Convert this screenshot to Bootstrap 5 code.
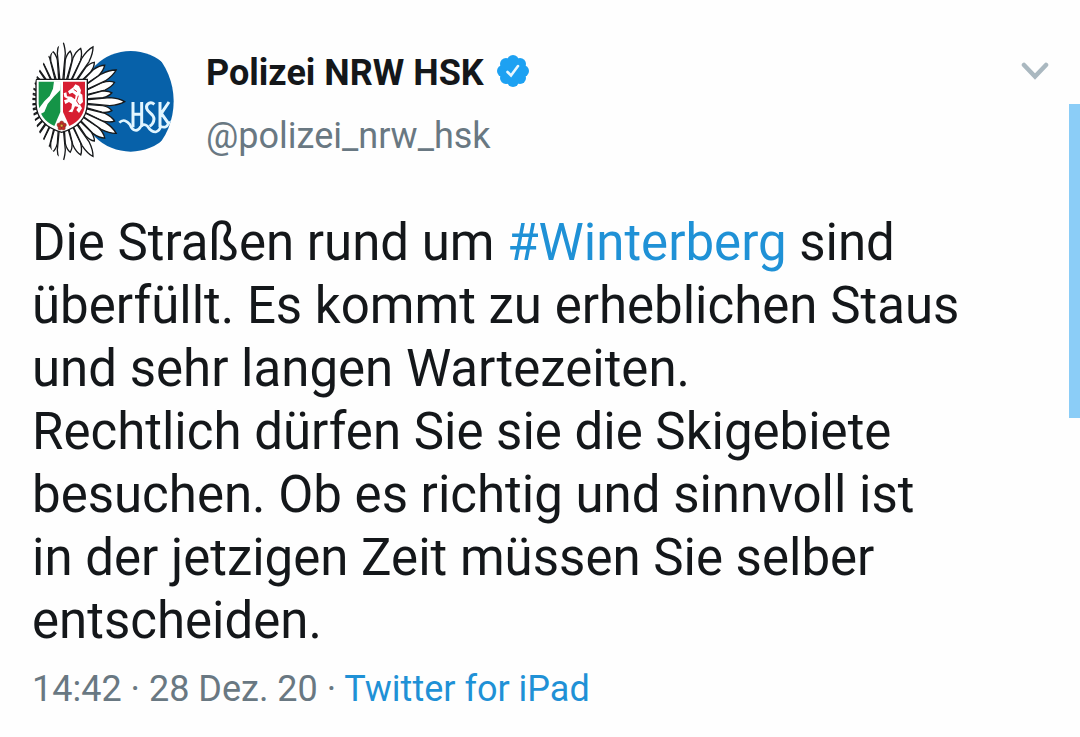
<!DOCTYPE html>
<html lang="de">
<head>
<meta charset="utf-8">
<meta name="viewport" content="width=device-width, initial-scale=1">
<title>Polizei NRW HSK</title>
<link rel="stylesheet" href="https://cdn.jsdelivr.net/npm/bootstrap@5.3.0/dist/css/bootstrap.min.css">
<style>
  body { font-family: Roboto, "Liberation Sans", sans-serif; color: #14171a; background: #fefefe; }
  .tweet { padding: 30px 31px 24px 32px; }
  .avatar { width: 144px; height: 140px; }
  .identity { margin-left: 30px; padding-top: 22px; }
  .author { font-size: 36px; line-height: 42px; font-weight: 700; }
  .verified { margin-left: 13px; margin-bottom: 5px; }
  .handle, .meta { font-size: 36px; line-height: 42px; color: #697882; }
  .handle { margin-top: 21px; }
  .tweet-text { font-size: 51px; line-height: 63px; margin-top: 41px; max-width: 932px; }
  .tweet-link { color: #1f91d6; text-decoration: none; }
  .meta { margin-top: 16px; }
  .more { margin-top: 32px; }
  .scroll-thumb { top: 104px; right: 0; width: 11px; height: 314px; background: #8bcdf7; }
</style>
</head>
<body>
<main>
  <article class="tweet">
    <header class="d-flex align-items-start">
      <svg class="avatar flex-shrink-0" viewBox="37 0 432 420" role="img" aria-label="Polizei HSK">
        <defs>
          <clipPath id="round"><circle cx="250" cy="214" r="212"/></clipPath>
          <path id="long" d="M60-4L145-12Q174-10 190 0Q174 10 145 12L60 4Z"/>
          <path id="mid" d="M60-4L135-12Q158-10 170 0Q158 10 135 12L60 4Z"/>
          <path id="short" d="M60-3L125-10Q144-9 154 0Q144 9 125 10L60 3Z"/>
        </defs>
        <g clip-path="url(#round)">
          <circle cx="333" cy="214" r="151" fill="#0761a9"/>
          <g transform="translate(125 215)" fill="#fff" stroke="#17191b" stroke-width="4">
            <use href="#short" transform="rotate(10)"/><use href="#mid" transform="rotate(20)"/>
            <use href="#mid" transform="rotate(40)"/><use href="#short" transform="rotate(50)"/>
            <use href="#mid" transform="rotate(70)"/><use href="#short" transform="rotate(80)"/>
            <use href="#short" transform="rotate(100)"/><use href="#mid" transform="rotate(110)"/>
            <use href="#short" transform="rotate(130)"/><use href="#mid" transform="rotate(140)"/>
            <use href="#short" transform="rotate(160)"/><use href="#short" transform="rotate(170)"/>
            <use href="#short" transform="rotate(190)"/><use href="#short" transform="rotate(200)"/>
            <use href="#mid" transform="rotate(220)"/><use href="#short" transform="rotate(230)"/>
            <use href="#mid" transform="rotate(250)"/><use href="#short" transform="rotate(260)"/>
            <use href="#short" transform="rotate(280)"/><use href="#mid" transform="rotate(290)"/>
            <use href="#short" transform="rotate(310)"/><use href="#mid" transform="rotate(320)"/>
            <use href="#mid" transform="rotate(340)"/><use href="#short" transform="rotate(350)"/>
            <use href="#long"/><use href="#long" transform="rotate(30)"/>
            <use href="#long" transform="rotate(60)"/><use href="#long" transform="rotate(90)"/>
            <use href="#long" transform="rotate(120)"/><use href="#long" transform="rotate(150)"/>
            <use href="#long" transform="rotate(180)"/><use href="#long" transform="rotate(210)"/>
            <use href="#long" transform="rotate(240)"/><use href="#long" transform="rotate(270)"/>
            <use href="#long" transform="rotate(300)"/><use href="#long" transform="rotate(330)"/>
          </g>
          <path d="M49 148H203V222Q200 286 126 307Q52 286 49 222Z" fill="#fff" stroke="#17191b" stroke-width="4"/>
          <path d="M57 155H122V246L104 288Q60 268 57 222Z" fill="#159447"/>
          <path d="M130 155H196V222Q193 268 149 288L130 246Z" fill="#d71f32"/>
          <path d="M103 154H124L122 180L102 200L84 222L74 246L61 253L57 236L74 214L90 198L100 176Z" fill="#fff"/>
          <path d="M161 172L167 163L178 168L184 181L182 190L188 194L190 216L181 224L187 235L178 249L170 240L176 231L166 229L158 247L146 245L155 236L157 222L148 216L137 222L133 211L145 207L134 201L132 190L140 187L142 199L155 200L166 208L168 196L158 188L149 192L145 184Z" fill="#fff"/>
          <path d="M162 178l10 7M176 197l-5 16 8 12" fill="none" stroke="#d71f32" stroke-width="3"/>
          <g fill="#c42a25" stroke="#74301f" stroke-width="1.5">
            <circle cx="126" cy="279" r="6"/><circle cx="118" cy="285" r="6"/><circle cx="134" cy="285" r="6"/>
            <circle cx="121" cy="294" r="6"/><circle cx="131" cy="294" r="6"/><circle cx="126" cy="287" r="4" fill="#e4b53c"/>
          </g>
          <g fill="none" stroke="#e2f6ff" stroke-linejoin="round">
            <path d="M299 278C310 266 322 272 331 284C339 304 354 307 363 290Q371 279 383 288Q394 306 408 306Q420 303 423 289Q440 297 447 280L466 268" stroke-width="8"/>
            <path d="M340 216V292M366 216V290M340 253H366M404 223C393 213 378 221 381 235C384 248 403 251 403 267Q402 281 390 289M421 216V292M448 216L425 250L449 284" stroke-width="9"/>
          </g>
        </g>
      </svg>
      <div class="identity flex-grow-1">
        <div class="d-flex align-items-center author">
          <span>Polizei NRW HSK</span>
          <svg class="verified" width="32" height="32" viewBox="0 0 32 32" role="img" aria-label="Verifiziert">
            <g fill="#1da1f2"><circle cx="16" cy="16" r="12"/><circle cx="16" cy="6" r="6"/><circle cx="23" cy="9" r="6"/><circle cx="26" cy="16" r="6"/><circle cx="23" cy="23" r="6"/><circle cx="16" cy="26" r="6"/><circle cx="9" cy="23" r="6"/><circle cx="6" cy="16" r="6"/><circle cx="9" cy="9" r="6"/></g>
            <path d="M10.5 17L14 20.5L21 11" fill="none" stroke="#e9f7ff" stroke-width="2.6" stroke-linecap="round"/>
          </svg>
        </div>
        <div class="handle">@polizei_nrw_hsk</div>
      </div>
      <button type="button" class="more btn p-0 border-0 d-flex" aria-label="Mehr">
        <svg width="28" height="18" viewBox="0 0 28 18"><path d="M3 3L14 14.500L25 3" fill="none" stroke="#aab8c0" stroke-width="4.500" stroke-linecap="round"/></svg>
      </button>
    </header>
    <p class="tweet-text mb-0">Die Straßen rund um <a href="#" class="tweet-link">#Winterberg</a> sind überfüllt. Es kommt zu erheblichen Staus und sehr langen Wartezeiten.<br>Rechtlich dürfen Sie sie die Skigebiete besuchen. Ob es richtig und sinnvoll ist in der jetzigen Zeit müssen Sie selber entscheiden.</p>
    <div class="meta">14:42 · 28 Dez. 20 · <a href="#" class="tweet-link">Twitter for iPad</a></div>
  </article>
  <div class="scroll-thumb position-absolute" aria-hidden="true"></div>
</main>
<script src="https://cdn.jsdelivr.net/npm/bootstrap@5.3.0/dist/js/bootstrap.bundle.min.js"></script>
</body>
</html>
